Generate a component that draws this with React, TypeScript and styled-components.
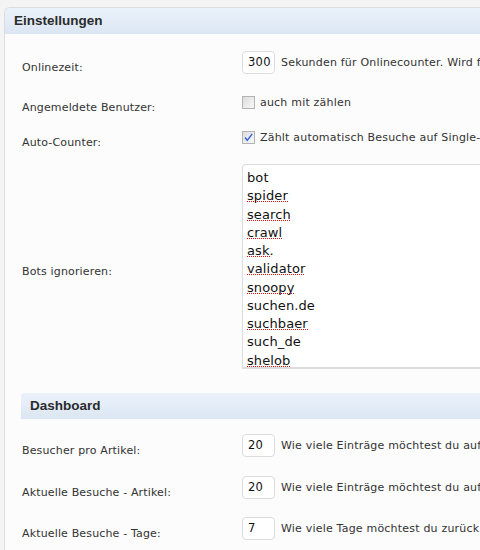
import React from "react";
import styled, { createGlobalStyle } from "styled-components";

const Global = createGlobalStyle`
  html, body { margin: 0; padding: 0; background: #f4f4f4; overflow: hidden; }
  body { font-family: "DejaVu Sans", Verdana, sans-serif; color: #333; }
`;

const Page = styled.div`
  width: 480px;
  height: 550px;
  overflow: hidden;
  padding: 7px 0 0 4px;
  box-sizing: border-box;
  background: #f4f4f4;
`;

const Panel = styled.section`
  width: 900px;
  border: 1px solid #dcdcdc;
  border-right: none;
  border-top-left-radius: 6px;
  background: #fbfcfb;
  overflow: hidden;
  min-height: 700px;
`;

const Header = styled.h3<{ $inset?: boolean }>`
  margin: 0;
  height: 26px;
  line-height: 26px;
  padding-left: 9px;
  font-family: "Liberation Sans", Arial, sans-serif;
  font-weight: bold;
  font-size: 13.5px;
  color: #2b2b2b;
  background: linear-gradient(#eaf1fb 0%, #e4edf8 45%, #dbe6f2 100%);
  border-top-left-radius: ${(p) => (p.$inset ? "4px" : "0")};
`;

const Body = styled.div`
  padding: 0 0 0 16px;
`;

const Row = styled.div<{ $mt: number }>`
  display: grid;
  grid-template-columns: 221px 1fr;
  align-items: center;
  margin-top: ${(p) => p.$mt}px;
`;

const Label = styled.div`
  padding: 11px 0 0 1px;
  line-height: 12px;
  font-size: 11px;
  letter-spacing: 0.15px;
  color: #333;
  white-space: nowrap;
`;

const Value = styled.div`
  display: flex;
  align-items: center;
  min-height: 23px;
  font-size: 11px;
  letter-spacing: 0.2px;
  color: #333;
  white-space: nowrap;
`;

const NumInput = styled.div`
  box-sizing: border-box;
  width: 33px;
  height: 23px;
  border: 1px solid #dcdcdc;
  border-radius: 4px;
  background: #fff;
  padding-left: 5px;
  font-size: 11.5px;
  letter-spacing: 0.3px;
  line-height: 21px;
  color: #111;
  margin-right: 6px;
  flex-shrink: 0;
`;

const Check = styled.span`
  box-sizing: border-box;
  width: 13px;
  height: 13px;
  border: 1px solid #b4b4b4;
  background: linear-gradient(135deg, #dcdcdc 0%, #eeeeee 60%, #f7f7f7 100%);
  margin-right: 5px;
  flex-shrink: 0;
  display: inline-flex;
  align-items: center;
  justify-content: center;
`;

const Textarea = styled.div`
  box-sizing: border-box;
  width: 600px;
  height: 205px;
  border: 1px solid #dcdcdc;
  border-bottom: 2px solid #dcdcdc;
  border-top-left-radius: 4px;
  background: #fff;
  padding: 4px 4px 0;
  font-size: 13px;
  line-height: 18.25px;
  letter-spacing: 0.1px;
  color: #111;
`;

const Word = styled.div``;

const Misspelled = styled.span`
  background-image: repeating-linear-gradient(to right, #e01010 0 1px, transparent 1px 2px);
  background-repeat: no-repeat;
  background-size: 100% 1px;
  background-position: 0 calc(100% - 1px);
`;

const SubHeader = styled(Header)`
  margin-top: 24px;
`;

const bots: [string, boolean][] = [
  ["bot", false],
  ["spider", true],
  ["search", true],
  ["crawl", true],
  ["ask", true],
  ["validator", true],
  ["snoopy", true],
  ["suchen.de", false],
  ["suchbaer", true],
  ["such_de", false],
  ["shelob", true],
];

function CheckBox({ checked }: { checked?: boolean }) {
  return (
    <Check>
      {checked && (
        <svg width="11" height="11" viewBox="0 0 11 11">
          <path d="M2 5.5 L4.3 8.3 L9.2 1.8" fill="none" stroke="#2f62d6" strokeWidth="1.4" />
        </svg>
      )}
    </Check>
  );
}

export default function App() {
  return (
    <Page>
      <Global />
      <Panel>
        <Header>Einstellungen</Header>
        <Body>
          <Row $mt={17}>
            <Label>Onlinezeit:</Label>
            <Value>
              <NumInput>300</NumInput>
              Sekunden für Onlinecounter. Wird für die Anzeige der Besucher online verwendet.
            </Value>
          </Row>
          <Row $mt={17}>
            <Label>Angemeldete Benutzer:</Label>
            <Value>
              <CheckBox />
              auch mit zählen
            </Value>
          </Row>
          <Row $mt={12}>
            <Label>Auto-Counter:</Label>
            <Value>
              <CheckBox checked />
              Zählt automatisch Besuche auf Single-Seiten und Artikeln.
            </Value>
          </Row>
          <Row $mt={15}>
            <Label>Bots ignorieren:</Label>
            <Value>
              <Textarea>
                {bots.map(([w, bad]) =>
                  w === "ask" ? (
                    <Word key={w}>
                      <Misspelled>ask</Misspelled>.
                    </Word>
                  ) : (
                    <Word key={w}>{bad ? <Misspelled>{w}</Misspelled> : w}</Word>
                  )
                )}
              </Textarea>
            </Value>
          </Row>
          <SubHeader $inset>Dashboard</SubHeader>
          <Row $mt={15}>
            <Label>Besucher pro Artikel:</Label>
            <Value>
              <NumInput>20</NumInput>
              Wie viele Einträge möchtest du auf dem Dashboard sehen?
            </Value>
          </Row>
          <Row $mt={19}>
            <Label>Aktuelle Besuche - Artikel:</Label>
            <Value>
              <NumInput>20</NumInput>
              Wie viele Einträge möchtest du auf dem Dashboard sehen?
            </Value>
          </Row>
          <Row $mt={18}>
            <Label>Aktuelle Besuche - Tage:</Label>
            <Value>
              <NumInput>7</NumInput>
              Wie viele Tage möchtest du zurück schauen?
            </Value>
          </Row>
        </Body>
      </Panel>
    </Page>
  );
}
